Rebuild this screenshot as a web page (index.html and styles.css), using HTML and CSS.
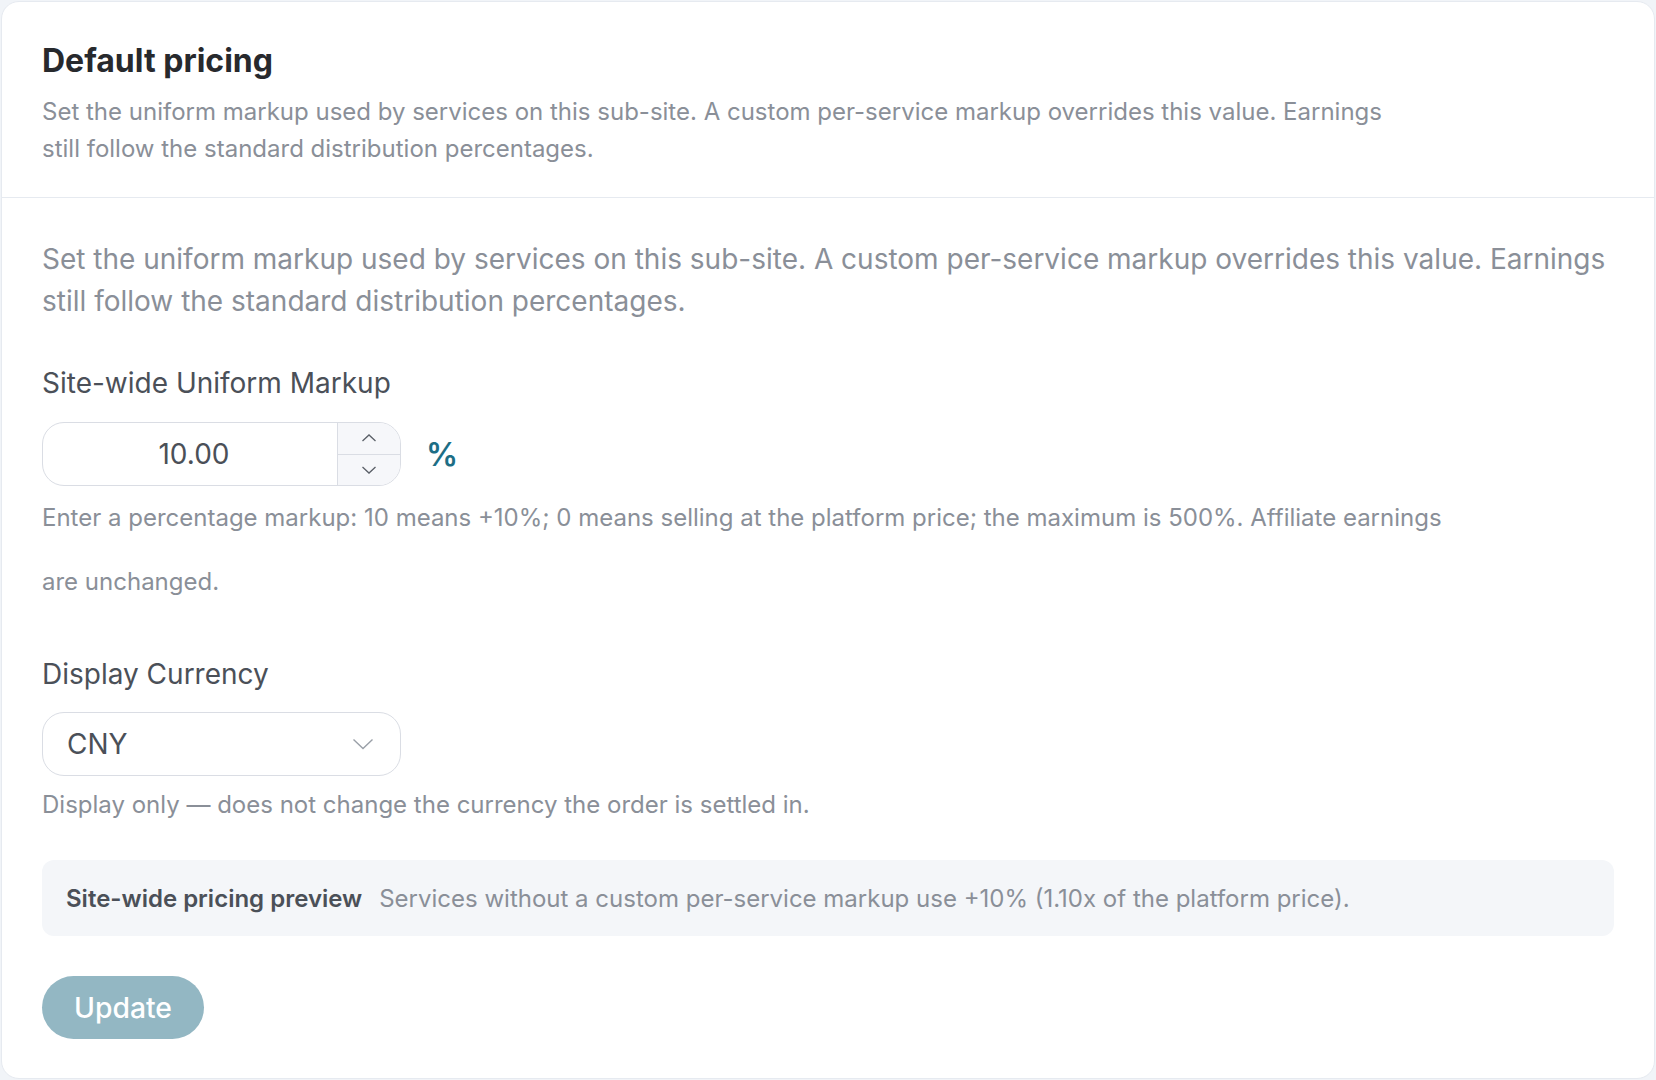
FILE: index.html
```html
<!DOCTYPE html>
<html lang="en">
  <head>
    <meta charset="UTF-8" />
    <meta name="viewport" content="width=device-width, initial-scale=1.0" />
    <title>Default pricing</title>
    <link rel="stylesheet" href="styles.css">
  </head>
  <body>
    <div class="card">
      <div class="card-header">
        <h2>Default pricing</h2>
        <p class="subtitle">
          Set the uniform markup used by services on this sub-site. A custom per-service markup overrides this value. Earnings still follow the standard distribution percentages.
        </p>
      </div>

      <div class="card-body">
        <p class="intro">
          Set the uniform markup used by services on this sub-site. A custom per-service markup overrides this value. Earnings still follow the standard distribution percentages.
        </p>

        <div class="field">
          <label for="markup">Site-wide Uniform Markup</label>
          <div class="markup-row">
            <div class="number-input">
              <input type="text" id="markup" value="10.00">
              <div class="stepper">
                <button class="step" aria-label="Increase">
                  <svg width="16" height="10" viewBox="0 0 16 10"><path d="M1.5 8 L8 2 L14.5 8" fill="none" stroke="#5b6068" stroke-width="1.3"/></svg>
                </button>
                <button class="step" aria-label="Decrease">
                  <svg width="16" height="10" viewBox="0 0 16 10"><path d="M1.5 2 L8 8 L14.5 2" fill="none" stroke="#5b6068" stroke-width="1.3"/></svg>
                </button>
              </div>
            </div>
            <span class="unit">%</span>
          </div>
          <p class="help help-tall">
            Enter a percentage markup: 10 means +10%; 0 means selling at the platform price; the maximum is 500%. Affiliate earnings are unchanged.
          </p>
        </div>

        <div class="field field-currency">
          <label for="currency">Display Currency</label>
          <div class="select">
            <span id="currency">CNY</span>
            <svg width="22" height="12" viewBox="0 0 22 12"><path d="M1.5 1.5 L11 10.5 L20.5 1.5" fill="none" stroke="#9aa0a8" stroke-width="1.4"/></svg>
          </div>
          <p class="help">Display only — does not change the currency the order is settled in.</p>
        </div>

        <div class="preview">
          <strong>Site-wide pricing preview</strong>
          <span>Services without a custom per-service markup use +10% (1.10x of the platform price).</span>
        </div>

        <button class="update-button" disabled>Update</button>
      </div>
    </div>
  </body>
</html>
```

FILE: styles.css
```css
body {
  margin: 0;
  padding: 1px;
  background-color: #f1f4f8;
  font-family: 'Inter', 'Noto Sans', sans-serif;
  color: #4b5058;
}
.card {
  background-color: #fff;
  border: 1px solid #e6eaf0;
  border-radius: 18px;
  height: 1078px;
  box-sizing: border-box;
}
.card-header {
  padding: 41px 40px 30px;
  border-bottom: 1px solid #e6eaf0;
}
.card-header h2 {
  margin: 0;
  font-size: 32px;
  line-height: 36px;
  font-weight: 700;
  color: #27292d;
}
.subtitle {
  margin: 14px 0 0;
  max-width: 1370px;
  font-size: 24px;
  line-height: 37px;
  color: #8a8f98;
}
.card-body {
  padding: 40px 40px 40px;
}
.intro {
  margin: 0;
  font-size: 28px;
  line-height: 42px;
  color: #8a8f98;
}
.field {
  margin-top: 43px;
}
.field label {
  display: block;
  font-size: 28px;
  line-height: 36px;
  color: #4b5058;
  margin-bottom: 21px;
}
.field-currency {
  margin-top: 42px;
}
.field-currency label {
  margin-bottom: 20px;
}
.markup-row {
  display: flex;
  align-items: center;
  gap: 25px;
}
.number-input {
  display: flex;
  width: 359px;
  height: 64px;
  box-sizing: border-box;
  border: 1.5px solid #dadde4;
  border-radius: 22px;
  overflow: hidden;
}
.number-input input {
  flex: 1;
  min-width: 0;
  border: none;
  outline: none;
  text-align: center;
  font-family: 'Inter', sans-serif;
  font-size: 28px;
  color: #4b5058;
  padding: 0 0 0 8px;
  background: transparent;
}
.stepper {
  width: 62px;
  display: flex;
  flex-direction: column;
  border-left: 1.5px solid #dadde4;
  background-color: #f6f7fa;
}
.step {
  flex: 1;
  border: none;
  background: transparent;
  padding: 0;
  display: flex;
  align-items: center;
  justify-content: center;
  cursor: pointer;
}
.step + .step {
  border-top: 1.5px solid #dadde4;
}
.unit {
  font-size: 32px;
  font-weight: 600;
  color: #1d6e85;
}
.help {
  margin: 11px 0 0;
  font-size: 24px;
  line-height: 36px;
  color: #8a8f98;
}
.help-tall {
  margin-top: 0;
  max-width: 1415px;
  line-height: 64px;
}
.select {
  display: flex;
  align-items: center;
  justify-content: space-between;
  width: 359px;
  height: 64px;
  box-sizing: border-box;
  padding: 0 26px 0 24px;
  border: 1.5px solid #dadde4;
  border-radius: 22px;
  font-size: 28px;
  color: #4b5058;
}
.preview {
  margin-top: 37px;
  display: flex;
  align-items: center;
  gap: 17px;
  height: 76px;
  padding: 0 24px;
  background-color: #f4f6f9;
  border-radius: 12px;
  font-size: 24px;
  color: #8a8f98;
}
.preview strong {
  font-weight: 600;
  color: #4b5058;
}
.update-button {
  margin-top: 40px;
  height: 63px;
  padding: 0 32px;
  border: none;
  border-radius: 32px;
  background-color: #93b7c3;
  color: #fff;
  font-family: 'Inter', sans-serif;
  font-size: 28.3px;
  font-weight: 500;
}
```
